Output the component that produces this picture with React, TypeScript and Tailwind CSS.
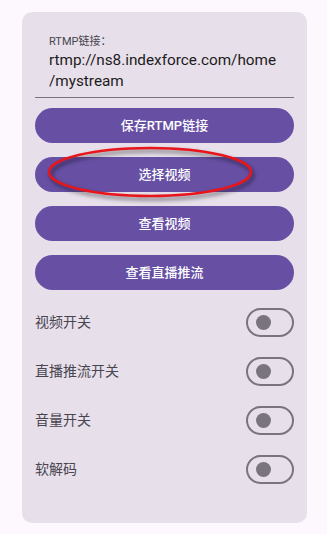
import React from "react";

const buttons = ["保存RTMP链接", "选择视频", "查看视频", "查看直播推流"];
const switches = ["视频开关", "直播推流开关", "音量开关", "软解码"];

function Toggle() {
  return (
    <div className="w-[48px] h-[29px] rounded-full border-2 border-[#79747e] flex items-center pl-[8px]">
      <div className="w-[15px] h-[15px] rounded-full bg-[#79747e]" />
    </div>
  );
}

export default function App() {
  return (
    <div
      className="min-h-[534px] w-full bg-[#fdf8fd] px-[22px] pt-[12px]"
      style={{ fontFamily: 'Roboto, "Noto Sans CJK SC", sans-serif' }}
    >
      <div className="relative w-[285px] h-[511px] rounded-[10px] bg-[#e7e0eb] px-[13px] pt-[22px]">
        {/* text field */}
        <div className="px-[14px] pb-[5px] border-b border-[#79747e]">
          <div className="text-[11px] leading-[16px] text-[#49454f]">RTMP链接：</div>
          <div className="text-[15.3px] leading-[21px] text-[#1d1b20]">
            <div>rtmp://ns8.indexforce.com/home</div>
            <div>/mystream</div>
          </div>
        </div>

        {/* buttons */}
        <div className="mt-[10px] flex flex-col gap-[14px]">
          {buttons.map((b) => (
            <button
              key={b}
              className="h-[35px] w-full rounded-full bg-[#6750a4] text-white text-[13px] font-medium flex items-center justify-center"
            >
              {b}
            </button>
          ))}
        </div>

        {/* switches */}
        <div className="mt-[18px] flex flex-col gap-[20px]">
          {switches.map((s) => (
            <div key={s} className="flex items-center justify-between h-[29px]">
              <span className="text-[14px] text-[#49454f]">{s}</span>
              <Toggle />
            </div>
          ))}
        </div>

        {/* red annotation ellipse */}
        <svg
          className="absolute left-[25px] top-[134px] drop-shadow-[2px_3px_2px_rgba(0,0,0,0.55)]"
          width="208"
          height="54"
          viewBox="0 0 208 54"
        >
          <ellipse cx="103" cy="26" rx="101" ry="24" fill="none" stroke="#e8151b" strokeWidth="2.6" />
        </svg>
      </div>
    </div>
  );
}
